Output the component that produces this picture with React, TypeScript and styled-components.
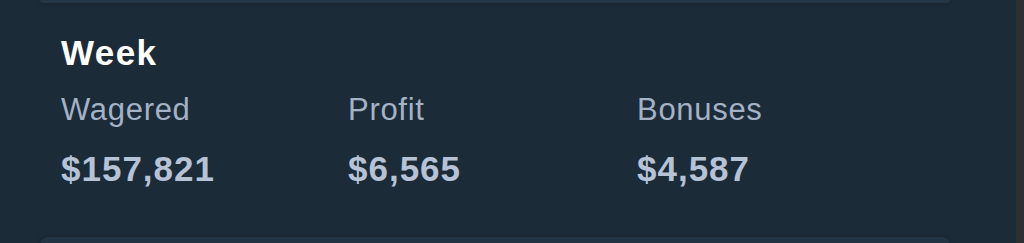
import React from "react";
import styled, { createGlobalStyle } from "styled-components";

const GlobalStyle = createGlobalStyle`
  html, body {
    margin: 0;
    padding: 0;
    background: #1c2b38;
  }
  body {
    font-family: "Liberation Sans", Arial, sans-serif;
  }
`;

interface Stat {
  label: string;
  value: string;
}

const stats: Stat[] = [
  { label: "Wagered", value: "$157,821" },
  { label: "Profit", value: "$6,565" },
  { label: "Bonuses", value: "$4,587" },
];

const App = () => {
  return (
    <>
      <GlobalStyle />
      <Screen>
        <Main>
          <CardEdge position="top" />
          <PeriodCard>
            <PeriodTitle>Week</PeriodTitle>
            <StatGrid>
              {stats.map((s) => (
                <StatItem key={s.label}>
                  <StatLabel>{s.label}</StatLabel>
                  <StatValue>{s.value}</StatValue>
                </StatItem>
              ))}
            </StatGrid>
          </PeriodCard>
          <CardEdge position="bottom" />
        </Main>
        <SideStrip />
      </Screen>
    </>
  );
};

export default App;

const Screen = styled.div`
  display: flex;
  width: 1024px;
  height: 243px;
  overflow: hidden;
  background: #1c2b38;
`;

const Main = styled.div`
  flex: 1;
  display: flex;
  flex-direction: column;
  padding: 0 66px 0 40px;
`;

const SideStrip = styled.div`
  width: 8px;
  background: #2e2f31;
`;

const CardEdge = styled.div<{ position: "top" | "bottom" }>`
  height: ${(p) => (p.position === "top" ? "3px" : "20px")};
  flex-shrink: 0;
  background: ${(p) => (p.position === "top" ? "#253646" : "#223343")};
  border-radius: ${(p) =>
    p.position === "top" ? "0 0 8px 8px" : "8px 8px 0 0"};
  box-shadow: 0 0 4px rgba(0, 0, 0, 0.25);
`;

const PeriodCard = styled.div`
  padding: 30px 21px 48px;
`;

const PeriodTitle = styled.div`
  font-size: 35px;
  line-height: 40px;
  font-weight: 700;
  letter-spacing: 1.4px;
  color: #ffffff;
`;

const StatGrid = styled.div`
  display: grid;
  grid-template-columns: 287px 289px 1fr;
  margin-top: 19px;
`;

const StatItem = styled.div`
  display: flex;
  flex-direction: column;
  gap: 21px;
`;

const StatLabel = styled.div`
  font-size: 31px;
  line-height: 36px;
  letter-spacing: 0.7px;
  color: #a4b2c6;
`;

const StatValue = styled.div`
  font-size: 35px;
  line-height: 40px;
  font-weight: 700;
  letter-spacing: 1px;
  color: #b6c2d5;
`;
